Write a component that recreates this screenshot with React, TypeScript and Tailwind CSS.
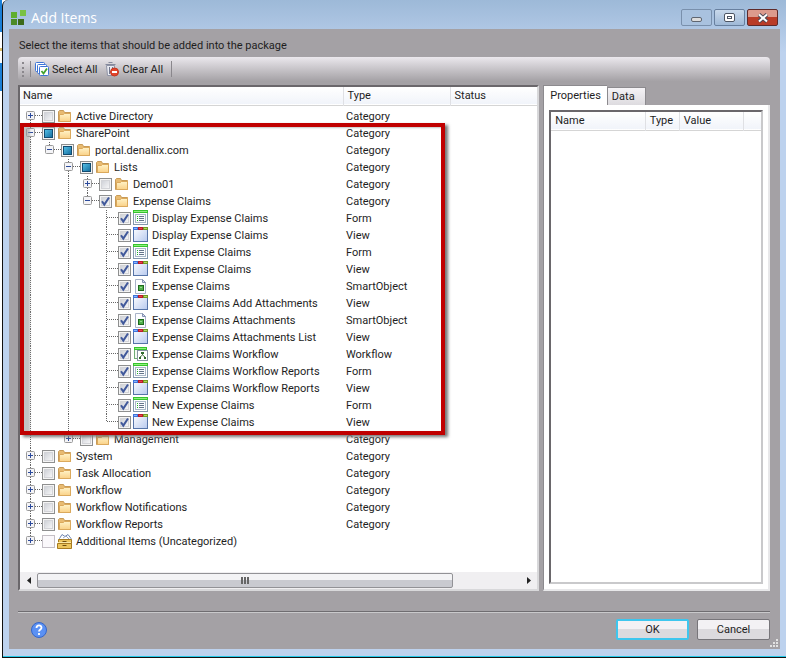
import { useState } from "react";

type IconKind = "folder" | "form" | "view" | "smartobject" | "workflow" | "cabinet";
type CheckState = "off" | "on" | "mixed" | "blank";

interface TreeRow {
  name: string;
  type: string;
  level: number;
  icon: IconKind;
  check: CheckState;
  toggle?: "plus" | "minus";
}

const folder = (name: string, level: number, check: CheckState = "off", toggle: "plus" | "minus" = "plus"): TreeRow => ({
  name,
  type: "Category",
  level,
  icon: "folder",
  check,
  toggle,
});

const item = (name: string, type: string, icon: IconKind): TreeRow => ({
  name,
  type,
  level: 4,
  icon,
  check: "on",
});

const rows: TreeRow[] = [
  folder("Active Directory", 0),
  folder("SharePoint", 0, "mixed", "minus"),
  folder("portal.denallix.com", 1, "mixed", "minus"),
  folder("Lists", 2, "mixed", "minus"),
  folder("Demo01", 3),
  folder("Expense Claims", 3, "on", "minus"),
  item("Display Expense Claims", "Form", "form"),
  item("Display Expense Claims", "View", "view"),
  item("Edit Expense Claims", "Form", "form"),
  item("Edit Expense Claims", "View", "view"),
  item("Expense Claims", "SmartObject", "smartobject"),
  item("Expense Claims Add Attachments", "View", "view"),
  item("Expense Claims Attachments", "SmartObject", "smartobject"),
  item("Expense Claims Attachments List", "View", "view"),
  item("Expense Claims Workflow", "Workflow", "workflow"),
  item("Expense Claims Workflow Reports", "Form", "form"),
  item("Expense Claims Workflow Reports", "View", "view"),
  item("New Expense Claims", "Form", "form"),
  item("New Expense Claims", "View", "view"),
  folder("Management", 2),
  folder("System", 0),
  folder("Task Allocation", 0),
  folder("Workflow", 0),
  folder("Workflow Notifications", 0),
  folder("Workflow Reports", 0),
  { name: "Additional Items (Uncategorized)", type: "", level: 0, icon: "cabinet", check: "blank", toggle: "plus" },
];

// true when another node of the same level follows under the same parent
const continues = (index: number, level: number) => {
  for (let i = index + 1; i < rows.length; i++) {
    if (rows[i].level < level) return false;
    if (rows[i].level === level) return true;
  }
  return false;
};

function Guide({ line }: { line: boolean }) {
  return (
    <svg className="h-[17px] w-[19px] shrink-0" viewBox="0 0 19 17">
      {line && <path d="M4.5 0v17" stroke="#666" strokeDasharray="1 1" />}
    </svg>
  );
}

function Node({ toggle, up, down }: { toggle?: "plus" | "minus"; up: boolean; down: boolean }) {
  return (
    <svg className="h-[17px] w-4 shrink-0" viewBox="0 0 16 17">
      <g stroke="#666" strokeDasharray="1 1">
        {up && <path d="M4.5 0v8" />}
        {down && <path d="M4.5 8v9" />}
        <path d="M5 7.5h11" />
      </g>
      {toggle && (
        <>
          <rect x=".5" y="3.5" width="8" height="8" rx="1" fill="#f4f4f7" stroke="#9a9a9a" />
          <path d="M2 7.5h5" stroke="#2b4a9b" />
          {toggle === "plus" && <path d="M4.5 5v5" stroke="#2b4a9b" />}
        </>
      )}
    </svg>
  );
}

function CheckBox({ state, label }: { state: CheckState; label: string }) {
  const [checked, setChecked] = useState(state === "on");
  const mixed = state === "mixed" && !checked;
  return (
    <span className="relative mr-0.5 h-[13px] w-[13px] shrink-0">
      <input
        type="checkbox"
        aria-label={label}
        checked={checked}
        onChange={(e) => setChecked(e.target.checked)}
        className={`block h-[13px] w-[13px] appearance-none border ${
          state === "blank" ? "border-[#c4bfc6] bg-[#faf8fb]" : "border-[#8e8f8f] bg-[#f4f4f4]"
        }`}
      />
      <svg className="pointer-events-none absolute inset-0 h-[13px] w-[13px]" viewBox="0 0 13 13">
        {state !== "blank" && (
          <>
            <defs>
              <linearGradient id="well" x1="0" y1="0" x2="1" y2="1">
                <stop offset="0" stopColor="#cdd0d6" />
                <stop offset="1" stopColor="#f8f8f9" />
              </linearGradient>
              <linearGradient id="mixed" x1="0" y1="0" x2="1" y2="1">
                <stop offset="0" stopColor="#58c4ea" />
                <stop offset="1" stopColor="#126a9c" />
              </linearGradient>
            </defs>
            <rect x="2.5" y="2.5" width="8" height="8" fill="url(#well)" stroke="#d3d4d8" />
          </>
        )}
        {mixed && <rect x="2.5" y="2.5" width="8" height="8" fill="url(#mixed)" stroke="#124b70" />}
        {checked && <path d="M3 6.2 5.3 9.6 10 2.5" fill="none" stroke="#41599b" strokeWidth="2" />}
      </svg>
    </span>
  );
}

function ItemIcon({ kind }: { kind: IconKind }) {
  return (
    <svg className="h-[17px] w-4 shrink-0" viewBox="0 0 16 17">
      {kind === "folder" && (
        <>
          <defs>
            <linearGradient id="folder" x1="0" y1="0" x2="0" y2="1">
              <stop offset="0" stopColor="#fff3c8" />
              <stop offset="1" stopColor="#fad187" />
            </linearGradient>
          </defs>
          <path d="M1.5 13.5v-10l1-1h4l1 2h6v9z" fill="#e8bb72" stroke="#c89b57" />
          <path d="M2.5 6.5h4l1-1h6v8h-11z" fill="url(#folder)" stroke="#dba95c" />
        </>
      )}
      {kind === "form" && (
        <>
          <rect x=".5" y=".5" width="14" height="14" fill="#fff" stroke="#8398ac" />
          <path d="M0 0h15v3H0z" fill="#35c42e" />
          <path d="M1 1h13v1H1z" fill="#8ff07e" />
          <rect x="2.5" y="4.5" width="10" height="8" fill="#fafcfe" stroke="#a9b8c8" />
          <path d="M4 6.5h1m-1 2h1m-1 2h1" stroke="#22b322" />
          <path d="M6 6.5h5m-5 2h5m-5 2h5" stroke="#65758a" />
        </>
      )}
      {kind === "view" && (
        <>
          <defs>
            <linearGradient id="view" x1="0" y1="0" x2="1" y2="1">
              <stop offset="0" stopColor="#fff" />
              <stop offset="1" stopColor="#b7c9ef" />
            </linearGradient>
          </defs>
          <rect x=".5" y=".5" width="14" height="14" fill="url(#view)" stroke="#5674a8" />
          <path d="M0 0h5v3H0z" fill="#3f74d8" />
          <path d="M5 0h5v3H5z" fill="#b91c2a" />
          <path d="M10 0h5v3h-5z" fill="#6f9a25" />
          <path d="M1 1h3v1H1z" fill="#8bb5ff" />
          <path d="M6 1h3v1H6z" fill="#e8434c" />
          <path d="M11 1h3v1h-3z" fill="#b6d861" />
        </>
      )}
      {kind === "smartobject" && (
        <>
          <path d="M2.5 1.5h7l3 3v11h-10z" fill="#fcfdff" stroke="#a9b3c9" />
          <path d="M9.5 1.5v3h3z" fill="#dbe2f0" stroke="#8492b3" />
          <rect x="5.5" y="7.5" width="5" height="5" fill="#4fae4a" stroke="#1d6b1d" />
          <path d="M7 9.5h2" stroke="#95da8e" />
        </>
      )}
      {kind === "workflow" && (
        <>
          <rect x="1.5" y="1.5" width="12" height="11" fill="#f4fbf3" stroke="#6fae74" />
          <path d="M1 1h13v3H1z" fill="#35c42e" />
          <path d="M2 2h11v1H2z" fill="#8ff07e" />
          <rect x="4.5" y="4.5" width="10" height="10" fill="#fff" stroke="#8793a3" />
          <path d="M8 6h3v2H8zM6 11h2v2H6zM11 11h2v2h-2z" fill="#2f6b2c" />
          <path d="M9.5 8v1L7 11M9.5 9l2.5 2" fill="none" stroke="#4b7748" />
        </>
      )}
      {kind === "cabinet" && (
        <>
          <path d="M2.5 5.5 5 1.5l3 2 3-2 3 4v2h-12z" fill="#fff" stroke="#7187b2" />
          <path d="M6 5l3-2 3 3" fill="none" stroke="#9aa8c6" />
          <path d="M1.5 6.5h13v4h-13zM.5 10.5h14v5H.5z" fill="#ecc55c" stroke="#a77b20" />
          <path d="M1 9.5h13" stroke="#fbe9a7" />
          <path d="M5.5 8.5h4M5.5 12.5h4" stroke="#6e4e10" />
        </>
      )}
    </svg>
  );
}

function Logo() {
  return (
    <svg className="h-4 w-4" viewBox="0 0 16 16">
      <path d="M0 2h6v6H0z" fill="#5fae2f" />
      <path d="M9 0h6v6H9z" fill="#79c143" />
      <path d="M0 9h6v6H0z" fill="#4c8a27" />
      <path d="M7 9h6v6H7z" fill="#3c6a1a" />
    </svg>
  );
}

function SelectAllIcon() {
  return (
    <svg className="h-4 w-4" viewBox="0 0 16 16" fill="#fff" stroke="#3d74d6">
      <rect x=".5" y="1.5" width="9" height="9" rx="1" />
      <rect x="2.5" y="3.5" width="9" height="9" rx="1" />
      <rect x="4.5" y="5.5" width="9" height="9" rx="1" />
      <path d="m6.5 10 2 2.500 3.500-5" fill="none" stroke="#43a32c" strokeWidth="1.800" />
    </svg>
  );
}

function ClearAllIcon() {
  return (
    <svg className="h-4 w-4" viewBox="0 0 16 16">
      <path d="M1.5 4.500h8l-1 10h-6z" fill="#e9ebf2" stroke="#8e93a6" />
      <path d="M4.500 6v7M7.500 6v5" stroke="#71778d" />
      <path d="M.500 3.500h10M3.500 1.500h4" stroke="#858a9d" />
      <circle cx="9.500" cy="11" r="4" fill="#e4452c" stroke="#c2361f" />
      <path d="M7 11h5" stroke="#fff" strokeWidth="2" />
    </svg>
  );
}

const captionButton = "flex h-[17px] items-center justify-center rounded-xs border";

export default function App() {
  const [tab, setTab] = useState("Properties");

  return (
    <div className="flex min-h-screen bg-white font-['Roboto',sans-serif] text-[11px] leading-[17px] text-[#1e1e1e]">
      {/* Sliver of the window behind the dialog */}
      <div className="flex w-0.5 flex-col">
        <span className="h-8 bg-[#1a7fd6]" />
        <span className="mt-4 h-[3px] bg-[#d9bd6a]" />
        <span className="mt-3 h-7 bg-[#1a7fd6]" />
      </div>

      <div className="mb-0.5 flex min-w-0 flex-1 flex-col rounded-tl-md border-b border-l border-[#111] bg-linear-to-b from-[#9db9d8] to-[#bdd2ee] to-8%">
        <div className="flex flex-1 flex-col border-b border-[#23c8e8] px-1.5 pb-[7px]">
          {/* Title bar */}
          <header className="flex h-[29px] items-center px-0.5 pt-1.5">
            <Logo />
            <h1 className="ml-1 flex-1 font-['Open_Sans',sans-serif] text-sm text-white">Add Items</h1>
            <div className="flex gap-0.5">
              <button aria-label="Minimize" className={`${captionButton} w-[31px] border-[#7990ac] bg-[#a9c2df]`}>
                <span className="mt-1 h-[5px] w-[11px] rounded-xs border border-[#5f6671] bg-[#ddd]" />
              </button>
              <button aria-label="Maximize" className={`${captionButton} w-[31px] border-[#68809f] bg-linear-to-b from-[#c9d9eb] to-[#9fb9d7]`}>
                <span className="flex h-[9px] w-[11px] items-center justify-center rounded-xs border border-[#4d5563] bg-white">
                  <span className="h-[3px] w-[5px] border border-[#4d5563]" />
                </span>
              </button>
              <button aria-label="Close" className={`${captionButton} w-[31px] border-[#5f2a2a] bg-linear-to-b from-[#dc9a8d] from-45% to-[#b93c28] to-50%`}>
                <svg className="h-3 w-3" viewBox="0 0 12 12">
                  <path d="m2 2.500 8 7m0-7-8 7" stroke="#4c4a58" strokeWidth="4" />
                  <path d="m2 2.500 8 7m0-7-8 7" stroke="#fff" strokeWidth="2" />
                </svg>
              </button>
            </div>
          </header>

          <main className="flex flex-1 flex-col bg-[#a4a1a5] pt-2 pr-2.5 pl-[9px]">
            <p className="px-px">Select the items that should be added into the package</p>

            {/* Toolbar */}
            <div className="mt-[3px] flex h-6 items-center rounded-sm bg-linear-to-b from-[#ebe8ed] to-[#a5a2a6] px-1">
              <span className="mr-1.5 h-[15px] border-l-2 border-dotted border-[#8a878c]" />
              <span className="mr-1 h-4 border-l border-[#8a878c]" />
              <button className="flex items-center gap-px">
                <SelectAllIcon />
                Select All
              </button>
              <button className="ml-2 flex items-center gap-px">
                <ClearAllIcon />
                Clear All
              </button>
              <span className="ml-2 h-4 border-l border-[#8a878c]" />
            </div>

            <div className="mt-1 flex flex-1 gap-1">
              {/* Tree */}
              <section className="flex min-w-0 flex-[520] flex-col border-2 border-t-[#6a676b] border-r-[#d8d8da] border-b-[#d8d8da] border-l-[#6a676b] bg-white">
                <div className="relative flex-1">
                  <table className="w-full table-fixed border-collapse text-left">
                    <thead>
                      <tr className="h-[18px] border-b border-[#d5d5d5] bg-linear-to-b from-white to-[#f1f4fa]">
                        <th className="w-[323px] border-r border-[#dfe0e4] px-[3px] py-0 font-normal">Name</th>
                        <th className="w-[107px] border-r border-[#dfe0e4] px-1 py-0 font-normal">Type</th>
                        <th className="px-1 py-0 font-normal">Status</th>
                      </tr>
                    </thead>
                    <tbody>
                      <tr className="h-[3px]" aria-hidden="true" />
                      {rows.map((row, index) => (
                        <tr key={index} className="h-[17px]">
                          <td className="p-0 pl-1.5">
                            <div className="flex items-center whitespace-nowrap">
                              {Array.from({ length: row.level }, (_, level) => (
                                <Guide key={level} line={continues(index, level)} />
                              ))}
                              <Node toggle={row.toggle} up={index > 0} down={continues(index, row.level)} />
                              <CheckBox state={row.check} label={row.name} />
                              <ItemIcon kind={row.icon} />
                              <span className="ml-[3px]">{row.name}</span>
                            </div>
                          </td>
                          <td className="p-0 pl-[3px]">{row.type}</td>
                          <td className="p-0" />
                        </tr>
                      ))}
                    </tbody>
                  </table>
                  {/* Highlight around the SharePoint branch */}
                  <div className="pointer-events-none absolute top-9 left-0 h-[312px] w-[425px] border-4 border-[#c00000] shadow-[3px_2px_3px_#777,inset_6px_1px_2px_#9999]" />
                </div>

                <div className="flex h-[17px] items-center bg-[#f0eff1]">
                  <button aria-label="Scroll left" className="flex w-[17px] justify-center">
                    <svg className="h-[7px] w-1" viewBox="0 0 4 7">
                      <path d="M4 0v7L0 3.500z" fill="#222" />
                    </svg>
                  </button>
                  <div className="flex flex-1">
                    <div className="flex h-[15px] w-[86%] items-center justify-center gap-px rounded-xs border border-[#929296] bg-linear-to-b from-[#f3f3f5] from-45% to-[#c9cad0] to-50%">
                      <span className="h-[7px] w-0.5 bg-[#666]" />
                      <span className="h-[7px] w-0.5 bg-[#666]" />
                      <span className="h-[7px] w-0.5 bg-[#666]" />
                    </div>
                  </div>
                  <button aria-label="Scroll right" className="flex w-[17px] justify-center">
                    <svg className="h-[7px] w-1" viewBox="0 0 4 7">
                      <path d="M0 0v7l4-3.500z" fill="#222" />
                    </svg>
                  </button>
                </div>
              </section>

              {/* Properties */}
              <section className="flex min-w-0 flex-[228] flex-col">
                <div role="tablist" className="flex h-5 items-end">
                  {["Properties", "Data"].map((name) => (
                    <button
                      key={name}
                      role="tab"
                      aria-selected={tab === name}
                      onClick={() => setTab(name)}
                      className={
                        tab === name
                          ? "h-5 border-t border-l border-[#8c8a8e] bg-white px-1.5"
                          : "h-[18px] border border-b-0 border-[#8c8a8e] bg-linear-to-b from-[#f5f3f6] to-[#dddbdf] pr-2.5 pl-1"
                      }
                    >
                      {name}
                    </button>
                  ))}
                </div>
                <div className="flex flex-1 flex-col border-r-2 border-b-2 border-l border-[#e8e8ea] border-l-[#8c8a8e] bg-white px-[5px] pt-[5px] pb-[5px]">
                  <div className="flex-1 border-2 border-t-[#6a676b] border-r-[#c9c9cb] border-b-[#c9c9cb] border-l-[#6a676b]">
                    <table className="w-full table-fixed border-collapse text-left">
                      <thead>
                        <tr className="h-[18px] border-b border-[#d5d5d5] bg-linear-to-b from-white to-[#f1f4fa]">
                          <th className="w-[94px] border-r border-[#dfe0e4] px-1 py-0 font-normal">Name</th>
                          <th className="w-[34px] border-r border-[#dfe0e4] px-1 py-0 font-normal">Type</th>
                          <th className="border-r border-[#dfe0e4] px-1 py-0 font-normal">Value</th>
                          <td className="w-[18px] p-0" />
                        </tr>
                      </thead>
                    </table>
                  </div>
                </div>
              </section>
            </div>

            {/* Footer */}
            <footer className="relative mt-5 flex h-[38px] items-center gap-2 border-t border-[#6f6d71] pb-0.5 shadow-[inset_0_1px_#c9c9cb]">
              <button aria-label="Help" className="ml-3">
                <svg className="h-[18px] w-[18px]" viewBox="0 0 18 18">
                  <circle cx="9" cy="9" r="7.500" fill="#5b91f3" stroke="#3566c9" />
                  <path d="M6.500 7c0-3.500 5-3.300 5-.3 0 1.800-2.500 1.800-2.500 3.800M9 12v2" fill="none" stroke="#fff" strokeWidth="1.800" />
                </svg>
              </button>
              <button className="ml-auto h-[21px] w-[73px] rounded-xs border-2 border-[#3ec6ee] bg-linear-to-b from-[#f3f1f4] from-45% to-[#dcdade] to-50% leading-none">
                OK
              </button>
              <button className="h-[21px] w-[73px] rounded-xs border border-[#77757a] bg-linear-to-b from-[#f3f1f4] from-45% to-[#dcdade] to-50% leading-none">
                Cancel
              </button>
              <svg className="absolute -right-2 bottom-0.5 h-2 w-2" viewBox="0 0 8 8" fill="#e2e2e2">
                <path d="M6 0h2v2H6zM3 3h2v2H3zM6 3h2v2H6zM0 6h2v2H0zM3 6h2v2H3zM6 6h2v2H6z" />
              </svg>
            </footer>
          </main>
        </div>
      </div>
    </div>
  );
}
